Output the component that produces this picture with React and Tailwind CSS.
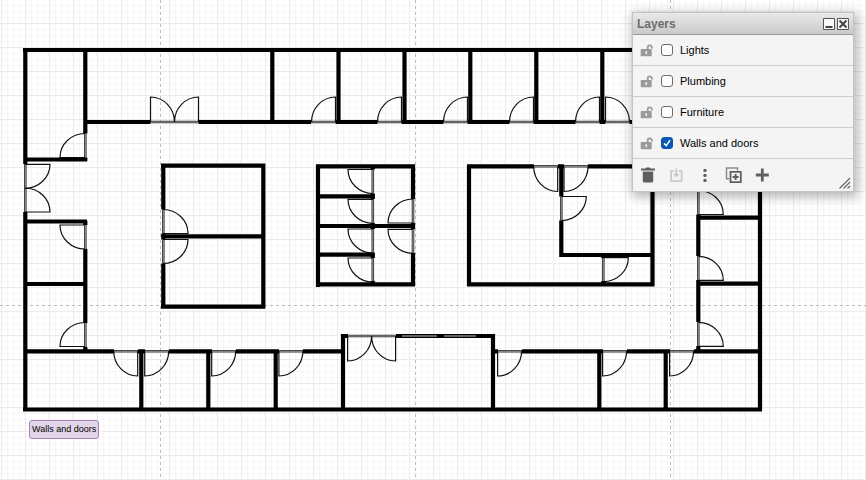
import React from "react";

// Walls as [x1, y1, x2, y2] centre lines.
const WALLS = [
  // outer shell
  [23, 50, 762, 50], [25.3, 50, 25.3, 164], [25.3, 212, 25.3, 410], [23, 409.5, 762, 409.5], [760, 50, 760, 410],
  // left rooms
  [85.3, 50, 85.3, 133.5], [85.3, 157.5, 85.3, 161], [25, 159.5, 87, 159.5],
  [25, 221.5, 87, 221.5], [85.3, 221, 85.3, 225], [85.3, 249, 85.3, 323], [85.3, 347, 85.3, 351], [25, 284, 85, 284],
  // corridor, top
  [84, 122, 150.5, 122], [198.5, 122, 311, 122], [335.5, 122, 377.5, 122], [401.5, 122, 443.5, 122],
  [467.5, 122, 509.5, 122], [533.5, 122, 575.5, 122], [599.5, 122, 605.5, 122], [629.5, 122, 700, 122],
  [272.3, 50, 272.3, 122], [338.5, 50, 338.5, 122], [404.5, 50, 404.5, 122],
  [470.3, 50, 470.3, 122], [536.3, 50, 536.3, 122], [602.3, 50, 602.3, 122],
  // corridor, bottom
  [25, 351.3, 114, 351.3], [138, 351.3, 145, 351.3], [169, 351.3, 212, 351.3], [236, 351.3, 279, 351.3],
  [303, 351.3, 343, 351.3], [493, 351.3, 498, 351.3], [522, 351.3, 603, 351.3], [627, 351.3, 670, 351.3],
  [694, 351.3, 760, 351.3],
  [141.3, 350, 141.3, 409], [208.3, 350, 208.3, 409], [275.7, 350, 275.7, 409], [343, 334, 343, 409],
  [493, 334, 493, 409], [599.3, 350, 599.3, 409], [665.7, 350, 665.7, 409],
  [341, 336, 348, 336], [396, 336, 402, 336], [437, 336, 444, 336], [476, 336, 495, 336],
  // meeting rooms
  [161, 165.7, 265.3, 165.7], [161, 306.7, 265.3, 306.7], [263.3, 164, 263.3, 308], [163, 236.4, 263, 236.4],
  [163.3, 164, 163.3, 209.5], [163.3, 233.5, 163.3, 239.5], [163.3, 263.5, 163.3, 308],
  // washrooms
  [316, 166.3, 415, 166.3], [316, 284.3, 415, 284.3], [318, 165, 318, 287],
  [413, 165, 413, 199], [413, 223, 413, 229], [413, 253, 413, 286],
  [318, 196.3, 374.8, 196.3], [318, 226, 413, 226], [318, 254.7, 374.8, 254.7],
  [372.8, 193.5, 372.8, 199], [372.8, 223, 372.8, 229], [372.8, 252.5, 372.8, 258], [372.8, 281, 372.8, 284], [372.8, 166, 372.8, 169.5],
  // open office
  [467, 166.3, 534, 166.3], [558, 166.3, 564, 166.3], [588, 166.3, 654.5, 166.3],
  [469, 165, 469, 286], [467, 284.3, 654.5, 284.3], [652.5, 165, 652.5, 286],
  [561.3, 166, 561.3, 196.5], [561.3, 220.5, 561.3, 257], [560, 255, 652.5, 255],
  [603.3, 255, 603.3, 258], [603.3, 281, 603.3, 284],
  // right rooms
  [698.3, 122, 698.3, 190], [698.3, 214.5, 698.3, 256], [698.3, 280, 698.3, 322], [698.3, 346, 698.3, 351],
  [698.3, 217.7, 760, 217.7], [698.3, 283.7, 760, 283.7],
];

// Thresholds drawn across door openings.
const SILLS = [
  [150.5, 122, 198.5, 122], [311, 122, 335.5, 122], [377.5, 122, 401.5, 122], [443.5, 122, 467.5, 122],
  [509.5, 122, 533.5, 122], [575.5, 122, 599.5, 122], [605.5, 122, 629.5, 122],
  [85.3, 133.5, 85.3, 157.5], [85.3, 225, 85.3, 249], [85.3, 323, 85.3, 347], [25.3, 164, 25.3, 212],
  [114, 351.3, 138, 351.3], [145, 351.3, 169, 351.3], [212, 351.3, 236, 351.3], [279, 351.3, 303, 351.3],
  [498, 351.3, 522, 351.3], [603, 351.3, 627, 351.3], [670, 351.3, 694, 351.3], [348, 336, 396, 336],
  [163.3, 209.5, 163.3, 233.5], [163.3, 239.5, 163.3, 263.5],
  [372.8, 169.5, 372.8, 193.5], [372.8, 199, 372.8, 223], [372.8, 229, 372.8, 252.5], [372.8, 258, 372.8, 281],
  [413, 199, 413, 223], [413, 229, 413, 253],
  [534, 166.3, 558, 166.3], [564, 166.3, 588, 166.3], [561.3, 196.5, 561.3, 220.5], [603.3, 258, 603.3, 281],
  [698.3, 190, 698.3, 214.5], [698.3, 256, 698.3, 280], [698.3, 322, 698.3, 346],
];

const WINDOWS = [[402, 336, 437, 336], [444, 336, 476, 336]];

// Doors as [hinge x, hinge y, leaf dx, leaf dy, opening dx, opening dy].
const DOORS = [
  [150.5, 122, 0, -25, 24, 0], [198.5, 122, 0, -25, -24, 0],
  [335.5, 122, 0, -25, -24, 0], [401.5, 122, 0, -25, -24, 0], [467.5, 122, 0, -25, -24, 0],
  [533.5, 122, 0, -25, -24, 0], [599.5, 122, 0, -25, -24, 0], [605.5, 122, 0, -25, 24, 0],
  [85, 157.5, -25, 0, 0, -24], [85, 225, -25, 0, 0, 24], [85, 346.5, -25, 0, 0, -24],
  [25, 164.3, 25, 0, 0, 24], [25, 212, 25, 0, 0, -24],
  [137.7, 351, 0, 25, -24, 0], [144.7, 351, 0, 25, 24, 0], [211.7, 351, 0, 25, 24, 0], [278.9, 351, 0, 25, 24, 0],
  [497.6, 351, 0, 25, 24, 0], [602.6, 351, 0, 25, 24, 0], [669.6, 351, 0, 25, 24, 0],
  [347.6, 336, 0, 25, 24, 0], [395.6, 336, 0, 25, -24, 0],
  [163, 233.5, 25, 0, 0, -24], [163, 239.5, 25, 0, 0, 24],
  [373, 169.5, -25, 0, 0, 24], [373, 199.3, -25, 0, 0, 24], [373, 229, -25, 0, 0, 24], [373, 258, -25, 0, 0, 24],
  [413, 223, -25, 0, 0, -24], [413, 229.3, -25, 0, 0, 24],
  [557.7, 166.5, 0, 25, -24, 0], [564, 166.5, 0, 25, 24, 0], [561.3, 196.5, 25, 0, 0, 24],
  [603.3, 257.7, 25, 0, 0, 24],
  [698.3, 214.5, 25, 0, 0, -24], [698.3, 280.4, 25, 0, 0, -24], [698.3, 346.3, 25, 0, 0, -24],
];

const toPath = (lines) => lines.map(([a, b, c, d]) => `M${a} ${b}L${c} ${d}`).join("");

function doorPath([x, y, lx, ly, ox, oy]) {
  const sweep = lx * oy - ly * ox > 0 ? 1 : 0;
  return `M${x} ${y}l${lx} ${ly}A25 24 ${lx ? 0 : 90} 0 ${sweep} ${x + ox} ${y + oy}`;
}

function FloorPlan() {
  return (
    <svg className="absolute inset-0 h-full w-full" role="img" aria-label="Floor plan">
      <defs>
        <pattern id="grid" x="1" y="23" width="24" height="24" patternUnits="userSpaceOnUse">
          <path d="M6.5 0V24M12.5 0V24M18.5 0V24M0 6.5H24M0 12.5H24M0 18.5H24" stroke="#f7f7f7" />
          <path d="M.5 0V24M0 .5H24" stroke="#ebebeb" />
        </pattern>
      </defs>
      <rect width="100%" height="100%" fill="url(#grid)" />
      <path d="M160.5 0V2000M415.5 0V2000M670.5 0V2000M0 305.5H3000" stroke="#bdbdbd" strokeDasharray="3 3" />
      <g fill="none">
        <path d={toPath(SILLS)} stroke="#333" strokeWidth="2.6" />
        <path d={toPath(SILLS)} stroke="#999" strokeWidth="1" />
        <path d={DOORS.map(doorPath).join("")} stroke="#111" strokeWidth="1.2" />
        <path d={toPath(WALLS)} stroke="#000" strokeWidth="4.2" />
        <path d={toPath(WINDOWS)} stroke="#000" strokeWidth="4" />
        <path d={toPath(WINDOWS)} stroke="#666" strokeWidth="2" />
      </g>
    </svg>
  );
}

function LockIcon() {
  return (
    <svg viewBox="0 0 13 13" className="h-[13px] w-[13px]" aria-hidden="true">
      <path d="M7.7 6V3.500a2.100 2.100 0 0 1 4.200 0v1" fill="none" stroke="#9a9a9a" strokeWidth="1.800" />
      <path fillRule="evenodd" d="M1.400 5h9.600q.7 0 .7.7v5.900q0 .7-.7.7H1.400q-.7 0-.7-.7V5.700q0-.7.7-.7zM6.200 7.300a1 1 0 0 0-.5 1.900v1.400h1V9.200a1 1 0 0 0-.5-1.900z" fill="#9a9a9a" />
    </svg>
  );
}

function Layer({ name, checked }) {
  const id = "layer-" + name.replace(/ /g, "-").toLowerCase();
  return (
    <li className="flex h-[31px] items-center border-b border-[#cccccc] pl-[7px]">
      <button aria-label={"Lock " + name}><LockIcon /></button>
      <span className="relative ml-2 flex">
        <input id={id} type="checkbox" defaultChecked={checked}
          className="peer h-3 w-3 appearance-none rounded-[3px] border border-[#6b6b6b] bg-white checked:border-[#0a57b0] checked:bg-[#0a57b0]" />
        <svg viewBox="0 0 12 12" className="pointer-events-none absolute inset-0 hidden h-3 w-3 peer-checked:block" aria-hidden="true">
          <path d="M3 6.400l2.200 2.200L9 3.300" fill="none" stroke="#fff" strokeWidth="1.500" />
        </svg>
      </span>
      <label htmlFor={id} className="ml-[7px] text-[11px] leading-4 text-black">{name}</label>
    </li>
  );
}

function Toolbar() {
  return (
    <div className="relative flex h-8 items-center pl-[7px] text-[#5f5f5f]">
      <button aria-label="Remove" className="w-4">
        <svg viewBox="0 0 16 16" className="h-4 w-4" fill="currentColor" aria-hidden="true">
          <path d="M1 1.500h4.500l.8-1h3.400l.8 1H15v2H1zM2.800 4.500h10.400V14q0 1.500-1.500 1.500H4.300Q2.800 15.500 2.800 14z" />
        </svg>
      </button>
      <button aria-label="Move selection" className="ml-3 w-4 text-[#c4c4c4]">
        <svg viewBox="0 0 16 16" className="h-4 w-4" fill="none" stroke="currentColor" strokeWidth="1.600" aria-hidden="true">
          <path d="M5.800 4H3v10h10.600V4h-2.800M8.300 1.500v7" />
          <path d="M5.300 7h6l-3 3.300z" fill="currentColor" stroke="none" />
        </svg>
      </button>
      <button aria-label="More" className="ml-3 w-4">
        <svg viewBox="0 0 16 16" className="h-4 w-4" fill="currentColor" aria-hidden="true">
          <circle cx="9" cy="3.400" r="1.700" /><circle cx="9" cy="8.400" r="1.700" /><circle cx="9" cy="13.400" r="1.700" />
        </svg>
      </button>
      <button aria-label="Duplicate" className="ml-3 w-[18px]">
        <svg viewBox="0 0 18 18" className="h-[18px] w-[18px]" fill="none" stroke="currentColor" aria-hidden="true">
          <path d="M5 12.700H2.500V2h11v2.500" stroke="#8a8a8a" strokeWidth="1.500" />
          <path d="M6.500 5.800h10.300v10.400H6.500z" strokeWidth="1.800" />
          <path d="M11.600 8v6M8.600 11h6" strokeWidth="2" />
        </svg>
      </button>
      <button aria-label="Add layer" className="ml-3 w-4">
        <svg viewBox="0 0 16 16" className="h-4 w-4" fill="none" stroke="currentColor" strokeWidth="2.800" aria-hidden="true">
          <path d="M8.300 1.500v13M1.800 8h13" />
        </svg>
      </button>
      <svg viewBox="0 0 12 12" className="absolute right-0.5 bottom-0.5 h-3 w-3" fill="none" stroke="#666" strokeWidth="1.200" aria-hidden="true">
        <path d="M.5 11.500L11 1M4.500 11.500L11 5M8.500 11.500L11 9" />
      </svg>
    </div>
  );
}

function LayersPanel() {
  return (
    <section className="absolute top-3 right-3 w-[222px] border border-[#c3c3c3] bg-[#f4f4f4] shadow-[2px_3px_10px_2px_rgba(0,0,0,0.28)]">
      <header className="flex h-[22px] items-center border-b border-[#9a9a9a] bg-linear-to-b from-[#e9e9e9] to-[#c9c9c9] pr-1 pl-1">
        <h2 className="flex-1 text-[12px] leading-4 font-bold text-[#6d6d6d]">Layers</h2>
        <button aria-label="Minimize" className="mr-0.5">
          <svg viewBox="0 0 12 12" className="h-3 w-3" aria-hidden="true">
            <path d="M.5 .5h11v11H.5z" fill="#f8f8f8" stroke="#555" />
            <path d="M2.500 9h7" stroke="#444" strokeWidth="2" />
          </svg>
        </button>
        <button aria-label="Close">
          <svg viewBox="0 0 12 12" className="h-3 w-3" aria-hidden="true">
            <path d="M.5 .5h11v11H.5z" fill="#f8f8f8" stroke="#555" />
            <path d="M2.500 2.500l7 7M9.500 2.500l-7 7" stroke="#444" strokeWidth="2" />
          </svg>
        </button>
      </header>
      <ul>
        <Layer name="Lights" />
        <Layer name="Plumbing" />
        <Layer name="Furniture" />
        <Layer name="Walls and doors" checked />
      </ul>
      <Toolbar />
    </section>
  );
}

export default function App() {
  return (
    <main className="relative h-screen w-full overflow-hidden bg-white font-['Liberation_Sans',Arial,sans-serif]">
      <FloorPlan />
      <div className="absolute top-[420px] left-[29px] flex h-[19px] items-center rounded-[3px] border border-[#a680b8] bg-[#e1d5e7] px-0.5 pb-0.5 text-[9px] leading-3 text-black">
        Walls and doors
      </div>
      <LayersPanel />
    </main>
  );
}
